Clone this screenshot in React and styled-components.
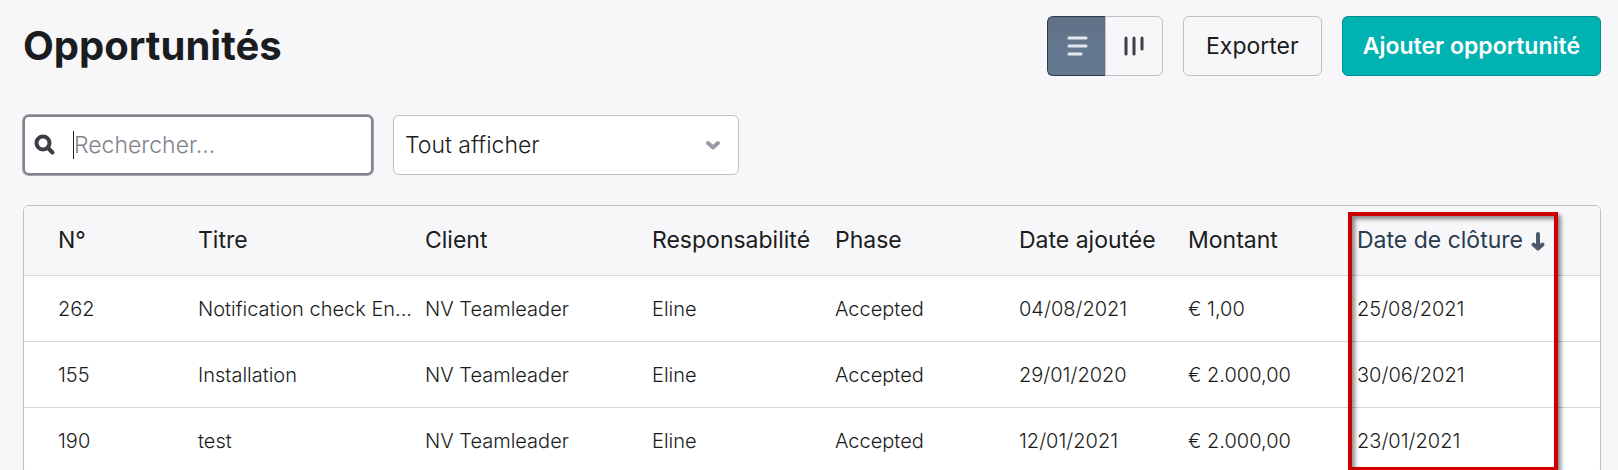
import React, { useState } from 'react'
import styled, { createGlobalStyle } from 'styled-components'

const GlobalStyle = createGlobalStyle`
  * {
    box-sizing: border-box;
  }
  body {
    margin: 0;
    background-color: #f7f7fa;
    color: #1a1c20;
    font-family: Inter, 'Liberation Sans', sans-serif;
  }
  button, input, select {
    font: inherit;
    color: inherit;
  }
`

const Page = styled.main`
  height: 100vh;
  padding: 16px 17px 0 23px;
  overflow: hidden;
`

const Header = styled.header`
  display: flex;
  align-items: center;
  justify-content: space-between;
`

const Title = styled.h1`
  margin: 0;
  font-size: 40px;
  line-height: 60px;
  font-weight: 700;
`

const Actions = styled.div`
  display: flex;
  gap: 20px;
`

const Button = styled.button`
  height: 60px;
  padding: 0 ${({ $primary }) => ($primary ? 20 : 22)}px;
  border: 1px solid ${({ $primary }) => ($primary ? '#008d8e' : '#c0c0c4')};
  border-radius: 6px;
  background-color: ${({ $primary }) => ($primary ? '#00b2b2' : 'transparent')};
  color: ${({ $primary }) => ($primary ? '#ffffff' : '#1a1c20')};
  font-size: 23px;
  font-weight: ${({ $primary }) => ($primary ? 600 : 400)};
  white-space: nowrap;
  cursor: pointer;
`

const Toggle = styled.div`
  display: flex;
`

const ToggleButton = styled.button`
  display: flex;
  align-items: center;
  justify-content: center;
  width: 58px;
  height: 60px;
  padding: 0;
  border: 1px solid ${({ $active }) => ($active ? '#2a3b4d' : '#c0c0c4')};
  background: ${({ $active }) =>
    $active ? 'linear-gradient(#616f85, #64788f 50%)' : 'transparent'};
  color: ${({ $active }) => ($active ? '#e4e9ef' : '#3d3d44')};
  cursor: pointer;

  &:first-child {
    border-right: none;
    border-radius: 6px 0 0 6px;
  }
  &:last-child {
    border-radius: 0 6px 6px 0;
  }
`

const Icon = styled.svg`
  flex: none;
  fill: none;
  stroke: currentColor;
  stroke-width: ${({ $bold }) => ($bold ? 4 : 3)};
  stroke-linecap: round;
  stroke-linejoin: round;
`

const Filters = styled.div`
  display: flex;
  gap: 20px;
  margin: 39px 0 30px;
`

const SearchBox = styled.label`
  display: flex;
  align-items: center;
  width: 350px;
  height: 60px;
  padding: 0 9px;
  border: 2px solid #82828c;
  border-radius: 6px;
  box-shadow: 0 0 0 1px rgba(130, 130, 140, 0.7);
  background-color: #ffffff;
  color: #3d3d44;
`

const Caret = styled.span`
  width: 1px;
  height: 28px;
  margin-left: 17px;
  background-color: #1a1c20;
`

const SearchInput = styled.input`
  flex: 1;
  min-width: 0;
  padding: 0;
  border: none;
  outline: none;
  background: none;
  font-size: 23px;
  font-weight: 300;

  &::placeholder {
    color: #82828c;
    opacity: 1;
  }
`

const SelectBox = styled.div`
  display: grid;
  align-items: center;
  width: 346px;
  height: 60px;
  color: #9a9aa4;

  > * {
    grid-area: 1 / 1;
  }
  > svg {
    justify-self: end;
    margin-right: 16px;
    pointer-events: none;
  }
`

const Select = styled.select`
  appearance: none;
  width: 100%;
  height: 100%;
  padding: 0 11px;
  border: 1px solid #c0c0c4;
  border-radius: 6px;
  background-color: #ffffff;
  color: #1a1c20;
  font-size: 23px;
  font-weight: 300;
`

const Panel = styled.section`
  position: relative;
  border: 1px solid #c0c0c4;
  border-radius: 6px;
  background-color: #ffffff;
`

const Table = styled.table`
  width: 100%;
  table-layout: fixed;
  border-collapse: separate;
  border-spacing: 0;
`

const Col = styled.col`
  width: ${({ $width }) => $width}px;
`

const HeadCell = styled.th`
  height: 70px;
  padding: 0 5px 2px 7px;
  border-bottom: 1px solid #d8d8dc;
  background-color: #f7f7fa;
  color: ${({ $sorted }) => ($sorted ? '#2a3b4d' : '#1a1c20')};
  font-size: 23px;
  font-weight: 400;
  text-align: left;
  white-space: nowrap;

  &:first-child {
    padding-left: 34px;
    border-top-left-radius: 5px;
  }
  &:last-child {
    border-top-right-radius: 5px;
  }
`

const HeadLabel = styled.span`
  display: flex;
  align-items: center;
  gap: 7px;

  > svg {
    color: #4a5a6b;
  }
`

const Cell = styled.td`
  height: 66px;
  padding: 0 5px 0 7px;
  border-bottom: 1px solid #d8d8dc;
  font-size: 20px;
  font-weight: 300;
  overflow: hidden;
  text-overflow: ellipsis;
  white-space: nowrap;

  &:first-child {
    padding-left: 34px;
  }
`

const Highlight = styled.div`
  position: absolute;
  top: 6px;
  right: 42px;
  bottom: 3px;
  width: 210px;
  border: 4px solid #cc0000;
  box-shadow: 3px 3px 4px rgba(0, 0, 0, 0.45),
    inset 3px 3px 4px rgba(0, 0, 0, 0.45);
  pointer-events: none;
`

const columns = [
  { key: 'number', label: 'N°', width: 167 },
  { key: 'title', label: 'Titre', width: 227 },
  { key: 'client', label: 'Client', width: 227 },
  { key: 'owner', label: 'Responsabilité', width: 183 },
  { key: 'phase', label: 'Phase', width: 184 },
  { key: 'added', label: 'Date ajoutée', width: 169 },
  { key: 'amount', label: 'Montant', width: 169 },
  { key: 'closing', label: 'Date de clôture', width: 250, sorted: true },
]

const deals = [
  {
    number: '262',
    title: 'Notification check En...',
    client: 'NV Teamleader',
    owner: 'Eline',
    phase: 'Accepted',
    added: '04/08/2021',
    amount: '€ 1,00',
    closing: '25/08/2021',
  },
  {
    number: '155',
    title: 'Installation',
    client: 'NV Teamleader',
    owner: 'Eline',
    phase: 'Accepted',
    added: '29/01/2020',
    amount: '€ 2.000,00',
    closing: '30/06/2021',
  },
  {
    number: '190',
    title: 'test',
    client: 'NV Teamleader',
    owner: 'Eline',
    phase: 'Accepted',
    added: '12/01/2021',
    amount: '€ 2.000,00',
    closing: '23/01/2021',
  },
]

const App = () => {
  const [view, setView] = useState('list')
  const [search, setSearch] = useState('')

  return (
    <Page>
      <GlobalStyle />
      <Header>
        <Title>Opportunités</Title>
        <Actions>
          <Toggle>
            <ToggleButton
              $active={view === 'list'}
              aria-label='Liste'
              onClick={() => setView('list')}
            >
              <Icon width='22' height='22' viewBox='0 0 22 22'>
                <path d='M3 3h17M3 11h17M3 19h12' />
              </Icon>
            </ToggleButton>
            <ToggleButton
              $active={view === 'board'}
              aria-label='Pipeline'
              onClick={() => setView('board')}
            >
              <Icon width='22' height='22' viewBox='0 0 22 22'>
                <path d='M3 3v16M11 3v16M19 3v11' />
              </Icon>
            </ToggleButton>
          </Toggle>
          <Button>Exporter</Button>
          <Button $primary>Ajouter opportunité</Button>
        </Actions>
      </Header>
      <Filters>
        <SearchBox>
          <Icon width='22' height='22' viewBox='0 0 22 22' $bold>
            <circle cx='9' cy='9' r='6.5' />
            <path d='M14 14l4.5 4.5' />
          </Icon>
          {search === '' && <Caret />}
          <SearchInput
            aria-label='Rechercher'
            placeholder='Rechercher...'
            value={search}
            onChange={(e) => setSearch(e.target.value)}
          />
        </SearchBox>
        <SelectBox>
          <Select aria-label='Filtre'>
            <option>Tout afficher</option>
          </Select>
          <Icon width='20' height='20' viewBox='0 0 20 20' $bold>
            <path d='M5 8l5 4.5 5-4.5' />
          </Icon>
        </SelectBox>
      </Filters>
      <Panel>
        <Table>
          <colgroup>
            {columns.map((column) => (
              <Col key={column.key} $width={column.width} />
            ))}
          </colgroup>
          <thead>
            <tr>
              {columns.map((column) => (
                <HeadCell key={column.key} $sorted={column.sorted}>
                  <HeadLabel>
                    {column.label}
                    {column.sorted && (
                      <Icon width='16' height='24' viewBox='0 0 16 24' $bold>
                        <path d='M8 6v14M3.5 16.5l4.5 4 4.5-4' />
                      </Icon>
                    )}
                  </HeadLabel>
                </HeadCell>
              ))}
            </tr>
          </thead>
          <tbody>
            {deals.map((deal) => (
              <tr key={deal.number}>
                {columns.map((column) => (
                  <Cell key={column.key}>{deal[column.key]}</Cell>
                ))}
              </tr>
            ))}
          </tbody>
        </Table>
        <Highlight />
      </Panel>
    </Page>
  )
}

export default App
